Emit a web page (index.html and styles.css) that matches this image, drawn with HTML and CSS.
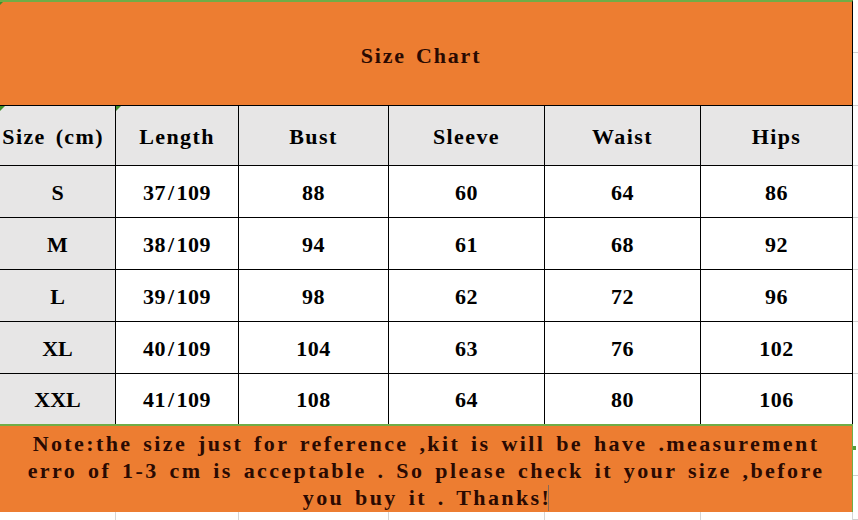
FILE: index.html
```html
<!DOCTYPE html>
<html>
<head>
<meta charset="utf-8">
<link rel="stylesheet" href="styles.css">
</head>
<body>
<div class="sheet">
  <div class="main">
    <div class="title"><span class="mark mark-top"></span><span class="txt">Size Chart</span></div>
    <div class="grid">
      <div class="cell head first"><span class="mark"></span><span class="lbl">Size (cm)</span></div>
      <div class="cell head"><span class="mark"></span><span class="lbl">Length</span></div>
      <div class="cell head"><span class="lbl">Bust</span></div>
      <div class="cell head"><span class="lbl">Sleeve</span></div>
      <div class="cell head"><span class="lbl">Waist</span></div>
      <div class="cell head"><span class="lbl">Hips</span></div>

      <div class="cell size">S</div>
      <div class="cell num">37<span class="sl">/</span>109</div>
      <div class="cell num">88</div>
      <div class="cell num">60</div>
      <div class="cell num">64</div>
      <div class="cell num">86</div>

      <div class="cell size">M</div>
      <div class="cell num">38<span class="sl">/</span>109</div>
      <div class="cell num">94</div>
      <div class="cell num">61</div>
      <div class="cell num">68</div>
      <div class="cell num">92</div>

      <div class="cell size">L</div>
      <div class="cell num">39<span class="sl">/</span>109</div>
      <div class="cell num">98</div>
      <div class="cell num">62</div>
      <div class="cell num">72</div>
      <div class="cell num">96</div>

      <div class="cell size">XL</div>
      <div class="cell num">40<span class="sl">/</span>109</div>
      <div class="cell num">104</div>
      <div class="cell num">63</div>
      <div class="cell num">76</div>
      <div class="cell num">102</div>

      <div class="cell size last">XXL</div>
      <div class="cell num last">41<span class="sl">/</span>109</div>
      <div class="cell num last">108</div>
      <div class="cell num last">64</div>
      <div class="cell num last">80</div>
      <div class="cell num last">106</div>
    </div>
    <div class="note">
      <p class="txt">Note:the size just for reference ,kit is will be have .measurement<br>erro of 1-3 cm is acceptable . So please check it your size ,before<br>you buy it . Thanks!<span class="caret"></span></p>
    </div>
    <div class="below">
      <div></div><div></div><div></div><div></div><div></div><div></div>
    </div>
  </div>
  <div class="edge">
    <div class="e1"></div>
    <div class="e2"></div>
    <div class="e3"></div>
    <div class="er"></div>
    <div class="er"></div>
    <div class="er"></div>
    <div class="er"></div>
    <div class="e4"><span class="handle"></span></div>
    <div class="e5"></div>
  </div>
</div>
</body>
</html>
```

FILE: styles.css
```css
html, body {
  margin: 0;
  padding: 0;
  background: #ffffff;
}

.sheet {
  display: flex;
  width: 858px;
  height: 520px;
  overflow: hidden;
  font-family: "Liberation Serif", "Times New Roman", serif;
  font-weight: bold;
  font-size: 22px;
}

.main {
  width: 853px;
  flex: none;
  display: flex;
  flex-direction: column;
}

.txt {
  letter-spacing: 2.4px;
  word-spacing: 3px;
  white-space: pre;
}

.lbl {
  letter-spacing: 1.4px;
  word-spacing: 3px;
  white-space: pre;
}

.title {
  position: relative;
  box-sizing: border-box;
  height: 106px;
  background: #ed7d31;
  border-top: 2px solid #70ad47;
  border-bottom: 1px solid #000;
  border-right: 1px solid #000;
  display: flex;
  align-items: center;
  justify-content: center;
  padding: 5px 10px 0 0;
  color: #2a0a02;
}

.title .txt {
  letter-spacing: 1.8px;
}

.mark {
  position: absolute;
  left: 0;
  top: 0;
  width: 0;
  height: 0;
  border-top: 5px solid #3f8f2a;
  border-right: 5px solid transparent;
}

.mark-top {
  border-top-width: 3px;
  border-right-width: 3px;
}

.grid {
  display: grid;
  grid-template-columns: 116px 123px 150px 156px 156px 152px;
  grid-template-rows: 60px 52px 52px 52px 52px 50px;
}

.cell {
  position: relative;
  box-sizing: border-box;
  border-right: 1px solid #000;
  border-bottom: 1px solid #000;
  display: flex;
  align-items: center;
  justify-content: center;
  color: #000;
}

.cell.last {
  border-bottom: none;
  padding-top: 2px;
}

.head {
  background: #e7e6e6;
  padding-top: 3px;
}

.head.first {
  justify-content: flex-end;
  padding-right: 11px;
  overflow: hidden;
}

.size {
  background: #e7e6e6;
  padding-top: 3px;
}

.num {
  letter-spacing: 0.5px;
  padding-top: 3px;
}

.sl {
  padding: 0 2px;
}

.note {
  box-sizing: border-box;
  height: 88px;
  background: #ed7d31;
  border-top: 2px solid #70ad47;
  border-right: 1px solid #70ad47;
  color: #2a0a02;
  text-align: center;
}

.note p {
  margin: 0;
  padding-top: 4px;
  line-height: 27px;
}

.caret {
  display: inline-block;
  width: 1px;
  height: 26px;
  margin-left: -3px;
  vertical-align: -6px;
  background: #8a6a55;
}

.below {
  flex: 1;
  display: grid;
  grid-template-columns: 116px 123px 150px 156px 156px 152px;
}

.below div {
  border-right: 1px solid #d6d6d6;
}

.edge {
  flex: 1;
  display: flex;
  flex-direction: column;
}

.edge div {
  box-sizing: border-box;
  border-bottom: 1px solid #d0d0d0;
}

.e1 { height: 53px; }
.e2 { height: 53px; }
.e3 { height: 60px; }
.er { height: 52px; }
.e4 {
  position: relative;
  height: 102px;
}
.e5 {
  flex: 1;
  border-bottom: none;
}

.handle {
  position: absolute;
  left: 0;
  top: 72px;
  width: 3px;
  height: 4px;
  background: #5a9a3a;
}
```
